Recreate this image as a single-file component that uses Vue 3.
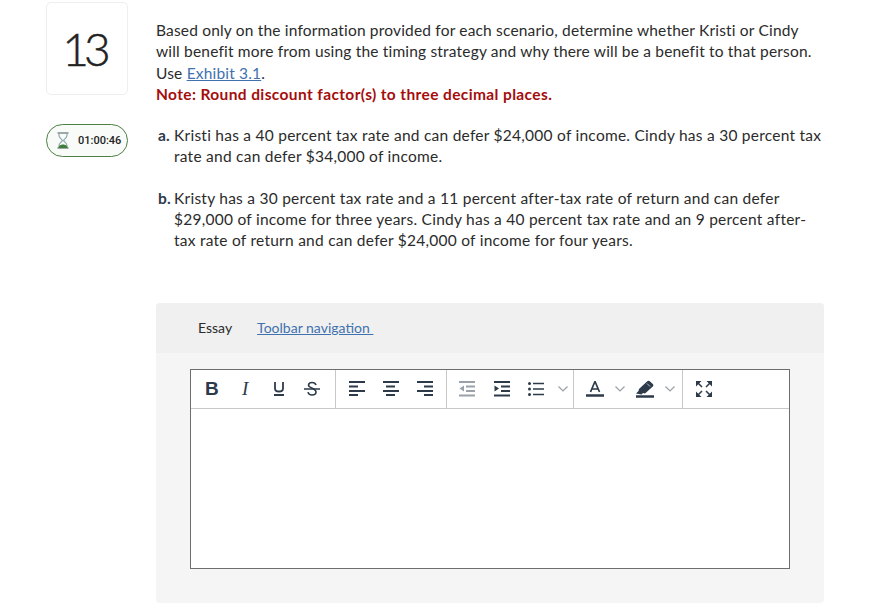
<script setup>
// Toolbar groups, each button draws its own icon in the template
const timer = '01:00:46'
const aligns = [
  'M0 1h16M0 5.500h9M0 10h16M0 14h9',
  'M0 1h16M3 5.500h9M0 10h16M3 14h9',
  'M0 1h16M7 5.500h9M0 10h16M7 14h9',
]
const chevron = 'M.5.500 5 5 9.500.500'
</script>

<template>
  <div class="page">
    <div class="side">
      <div class="number">13</div>
      <div class="timer">
        <svg width="12" height="17" viewBox="0 0 12 17">
          <path d="M.5 1h11M.5 16h11" fill="none" stroke="#7d8f8c" stroke-width="1.500" />
          <path d="M2 1v2.500c0 2.500 3 3.500 3.400 5C5 10 2 11 2 13.500V16M10 1v2.500c0 2.500-3 3.500-3.400 5C7 10 10 11 10 13.500V16" fill="none" stroke="#8aa3ad" stroke-width="1.100" />
          <path d="M1.500 16c0-2.500 2.500-3.500 4.500-3.500s4.500 1 4.500 3.500z" fill="#3f7d3a" />
        </svg>
        <span>{{ timer }}</span>
      </div>
    </div>

    <div class="main">
      <div class="prompt">
        Based only on the information provided for each scenario, determine whether Kristi or Cindy
        will benefit more from using the timing strategy and why there will be a benefit to that person.<br />
        Use <a class="link">Exhibit 3.1</a>.<br />
        <strong class="note">Note: Round discount factor(s) to three decimal places.</strong>
      </div>

      <ol class="parts">
        <li>
          <b>a.</b>
          <p>Kristi has a 40 percent tax rate and can defer $24,000 of income. Cindy has a 30 percent tax rate and can defer $34,000 of income.</p>
        </li>
        <li>
          <b>b.</b>
          <p>Kristy has a 30 percent tax rate and a 11 percent after-tax rate of return and can defer $29,000 of income for three years. Cindy has a 40 percent tax rate and an 9 percent after-tax rate of return and can defer $24,000 of income for four years.</p>
        </li>
      </ol>

      <div class="answer">
        <div class="answer-head">
          <span>Essay</span>
          <a class="link">Toolbar navigation&nbsp;</a>
        </div>
        <div class="answer-body">
          <div class="editor">
            <div class="toolbar">
              <div class="group g1">
                <button class="txt bold">B</button>
                <button class="txt ital">I</button>
                <button>
                  <svg width="12" height="15" viewBox="0 0 12 15"><path d="M2 1v6.500c0 4 8 4 8 0V1" fill="none" stroke="#2d3a4a" stroke-width="1.800" /><path d="M1 14h10" stroke="#2d3a4a" stroke-width="1.800" /></svg>
                </button>
                <button>
                  <svg width="16" height="16" viewBox="0 0 16 16"><path d="M12 4c-.6-1.800-2-2.500-4-2.500S4.500 2.500 4.500 4.200C4.500 7 12 7 12 11c0 2-2 3-4 3s-3.600-1-4-2.800" fill="none" stroke="#2d3a4a" stroke-width="1.600" /><path d="M0 8h16" stroke="#2d3a4a" stroke-width="1.400" /></svg>
                </button>
              </div>
              <div class="group g2">
                <button v-for="a in aligns" :key="a">
                  <svg width="16" height="16" viewBox="0 0 16 16"><path :d="a" stroke="#2d3a4a" stroke-width="1.800" /></svg>
                </button>
              </div>
              <div class="group g3">
                <button>
                  <svg width="16" height="16" viewBox="0 0 16 16"><path d="M0 1h16M7 5.500h9M7 10h9M0 14.500h16" stroke="#9aa1a8" stroke-width="1.800" /><path d="M5 4.500v6L.5 7.500z" fill="#9aa1a8" /></svg>
                </button>
                <button>
                  <svg width="16" height="16" viewBox="0 0 16 16"><path d="M0 1h16M7 5.500h9M7 10h9M0 14.500h16" stroke="#2d3a4a" stroke-width="1.800" /><path d="M.5 4.500v6l4.500-3z" fill="#2d3a4a" /></svg>
                </button>
                <button>
                  <svg width="16" height="16" viewBox="0 0 16 16"><path d="M5 2.500h11M5 8h11M5 13.500h11" stroke="#2d3a4a" stroke-width="1.700" /><circle cx="1.500" cy="2.500" r="1.500" fill="#2d3a4a" /><circle cx="1.500" cy="8" r="1.500" fill="#2d3a4a" /><circle cx="1.500" cy="13.500" r="1.500" fill="#2d3a4a" /></svg>
                </button>
                <svg class="chev" width="10" height="6" viewBox="0 0 10 6"><path :d="chevron" fill="none" stroke="#9aa1a8" stroke-width="1.200" /></svg>
              </div>
              <div class="group g4">
                <button>
                  <svg width="18" height="16" viewBox="0 0 18 16"><path d="M4.500 11 9 .5 13.500 11M6 8h6" fill="none" stroke="#2d3a4a" stroke-width="1.700" /><path d="M0 14.500h18" stroke="#2d3a4a" stroke-width="2.500" /></svg>
                </button>
                <svg class="chev" width="10" height="6" viewBox="0 0 10 6"><path :d="chevron" fill="none" stroke="#9aa1a8" stroke-width="1.200" /></svg>
                <button>
                  <svg width="18" height="18" viewBox="0 0 18 18"><path d="M0 13.500 2.500 11 3 9 11 1.500c1-1 2-1 2.800-.3l3 2.800c.8.800.8 1.800 0 2.600L9 13.500 7 13 5.500 14.500z" fill="#2d3a4a" /><path d="M11 3.500l3 3" stroke="#fff" stroke-width=".7" /><path d="M0 16.500h18" stroke="#2d3a4a" stroke-width="2.500" /></svg>
                </button>
                <svg class="chev" width="10" height="6" viewBox="0 0 10 6"><path :d="chevron" fill="none" stroke="#9aa1a8" stroke-width="1.200" /></svg>
              </div>
              <div class="group g5">
                <button>
                  <svg width="16" height="16" viewBox="0 0 16 16"><path d="M0 0h5.500L0 5.500zM16 0h-5.500L16 5.500zM0 16h5.500L0 10.500zM16 16h-5.500l5.500-5.500z" fill="#2d3a4a" /><path d="M1.500 1.500l4.500 4.500M14.500 1.500 10 6M1.500 14.500 6 10M14.500 14.500 10 10" stroke="#2d3a4a" stroke-width="1.500" /></svg>
                </button>
              </div>
            </div>
            <div class="area"></div>
          </div>
        </div>
      </div>
    </div>
  </div>
</template>

<style scoped>
.page {
  display: flex;
  height: 610px;
  overflow: hidden;
  box-sizing: border-box;
  padding: 2px 46px 0;
  gap: 28px;
  font-family: Lato, "Open Sans", sans-serif;
  font-size: 15.500px;
  line-height: 21.300px;
  color: #2b2b2b;
  background: #fff;
}

.side {
  width: 82px;
  flex: none;
}

.number {
  height: 93px;
  box-sizing: border-box;
  border: 1px solid #eeeeee;
  border-radius: 5px;
  padding-right: 6px;
  display: flex;
  align-items: center;
  justify-content: center;
  font-size: 46px;
  font-weight: 300;
  letter-spacing: -5px;
  -webkit-text-stroke: .5px #222;
  color: #222;
}

.timer {
  margin-top: 29px;
  height: 33px;
  box-sizing: border-box;
  border: 1px solid #4d7f45;
  border-radius: 17px;
  background: #f8fbf7;
  display: flex;
  align-items: center;
  gap: 9px;
  padding-left: 10px;
  font-family: Roboto, sans-serif;
  font-size: 11px;
  font-weight: 500;
  color: #222;
}

.main {
  width: 668px;
  padding-top: 18px;
}

.prompt {
  letter-spacing: .18px;
}

.link {
  color: #3f72af;
  text-decoration: underline;
}

.note {
  color: #a50d0d;
  font-weight: 700;
  letter-spacing: .38px;
}

.parts {
  list-style: none;
  margin: 20px 0 0;
  padding: 0;
  letter-spacing: .25px;
}

.parts li {
  display: flex;
  margin-bottom: 20px;
  padding-left: 2px;
  gap: 5px;
}

.parts b {
  width: 11px;
  flex: none;
  font-weight: 700;
  color: #2d3a4a;
}

.parts p {
  margin: 0;
}

.answer {
  margin-top: 51px;
  background: #f5f5f5;
  border-radius: 4px;
  overflow: hidden;
}

.answer-head {
  height: 50px;
  background: #f0f0f0;
  display: flex;
  align-items: center;
  gap: 25px;
  padding-left: 42px;
  font-size: 14px;
}

.answer-body {
  padding: 16px 34px 34px;
}

.editor {
  border: 1px solid #6e6e6e;
  background: #fff;
  height: 200px;
  box-sizing: border-box;
}

.toolbar {
  display: flex;
  height: 39px;
  box-sizing: border-box;
  border-bottom: 1px solid #c8c8c8;
}

.group {
  display: flex;
  align-items: center;
  box-sizing: border-box;
  border-right: 1px solid #c8c8c8;
}

.g1 { width: 145px; padding-left: 4px; }
.g1 button { width: 33.500px; }
.g2 { width: 111px; padding-left: 4px; }
.g2 button { width: 34px; }
.g3 { width: 127px; padding-left: 3px; }
.g3 button { width: 34.500px; }
.g3 .chev { margin-left: 4px; }
.g4 { width: 109px; padding-left: 6px; }
.g4 button { width: 30px; }
.g4 .chev { margin: 0 5px; }
.g5 { border-right: none; padding-left: 5px; }
.g5 button { width: 32px; }

button {
  height: 30px;
  padding: 0;
  border: none;
  background: none;
  display: flex;
  align-items: center;
  justify-content: center;
  color: #2d3a4a;
}

.txt {
  font-size: 19px;
}

.bold {
  font-family: "Liberation Sans", sans-serif;
  font-weight: 700;
}

.ital {
  font-family: "Liberation Serif", serif;
  font-style: italic;
}
</style>
